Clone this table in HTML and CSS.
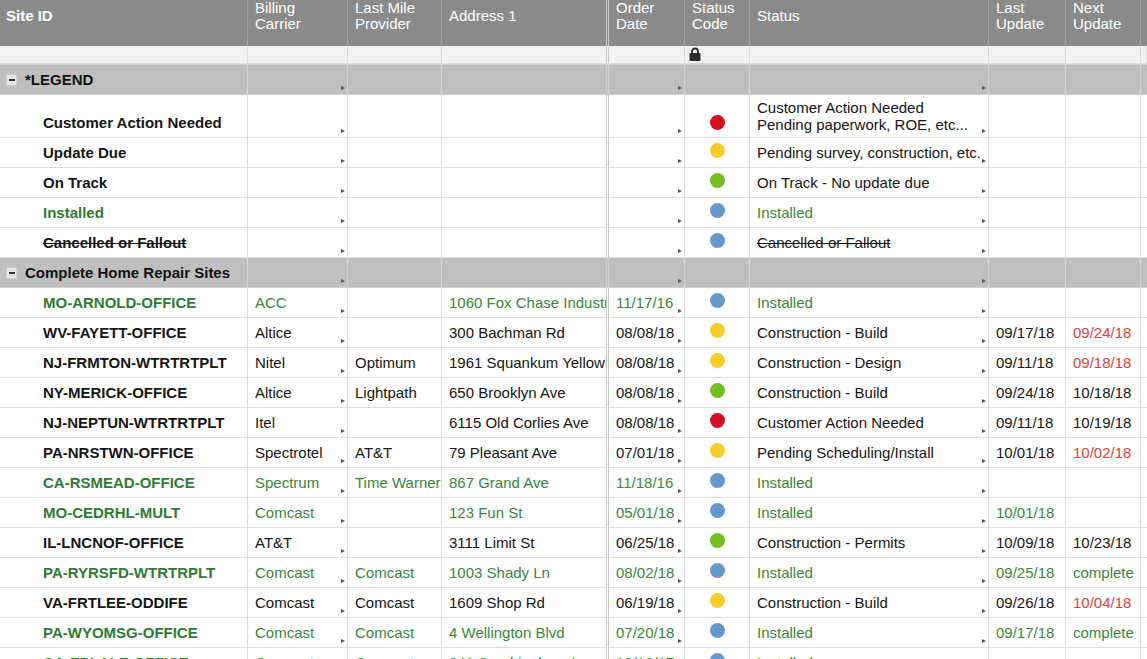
FILE: index.html
```html
<!DOCTYPE html>
<html lang="en">
<head>
<meta charset="utf-8">
<title>Sites</title>
<link rel="stylesheet" href="styles.css">
</head>
<body>
<div class="sheet">
  <div class="row head">
    <div class="hc site">Site ID</div>
    <div class="hc">Billing<br>Carrier</div>
    <div class="hc">Last Mile<br>Provider</div>
    <div class="hc frz">Address 1</div>
    <div class="hc">Order<br>Date</div>
    <div class="hc">Status<br>Code</div>
    <div class="hc">Status</div>
    <div class="hc">Last<br>Update</div>
    <div class="hc">Next<br>Update</div>
    <div class="hc"></div>
  </div>
  <div class="row filter">
    <div class="fc"></div><div class="fc"></div><div class="fc"></div><div class="fc frz"></div><div class="fc"></div>
    <div class="fc lockcell"><svg class="lock" width="12" height="14" viewBox="0 0 12 14"><path d="M3 7 V4.5 A3 3 0 0 1 9 4.5 V7" fill="none" stroke="#2b2b2b" stroke-width="1.8"/><rect x="0.5" y="6" width="11" height="8" rx="1" fill="#2b2b2b"/></svg></div>
    <div class="fc"></div><div class="fc"></div><div class="fc"></div><div class="fc"></div>
  </div>

  <div class="row group">
    <div class="c gsite"><span class="minus"></span><span>*LEGEND</span></div>
    <div class="c m"></div><div class="c"></div><div class="c frz"></div><div class="c m"></div><div class="c"></div><div class="c m"></div><div class="c"></div><div class="c"></div><div class="c"></div>
  </div>

  <div class="row tall">
    <div class="c site b">Customer Action Needed</div>
    <div class="c m"></div><div class="c"></div><div class="c frz"></div><div class="c m"></div>
    <div class="c code"><span class="dot red"></span></div>
    <div class="c m two">Customer Action Needed<br>Pending paperwork, ROE, etc...</div>
    <div class="c"></div><div class="c"></div><div class="c"></div>
  </div>
  <div class="row">
    <div class="c site b">Update Due</div>
    <div class="c m"></div><div class="c"></div><div class="c frz"></div><div class="c m"></div>
    <div class="c code"><span class="dot yel"></span></div>
    <div class="c m">Pending survey, construction, etc.</div>
    <div class="c"></div><div class="c"></div><div class="c"></div>
  </div>
  <div class="row">
    <div class="c site b">On Track</div>
    <div class="c m"></div><div class="c"></div><div class="c frz"></div><div class="c m"></div>
    <div class="c code"><span class="dot grn"></span></div>
    <div class="c m">On Track - No update due</div>
    <div class="c"></div><div class="c"></div><div class="c"></div>
  </div>
  <div class="row g">
    <div class="c site b">Installed</div>
    <div class="c m"></div><div class="c"></div><div class="c frz"></div><div class="c m"></div>
    <div class="c code"><span class="dot blu"></span></div>
    <div class="c m">Installed</div>
    <div class="c"></div><div class="c"></div><div class="c"></div>
  </div>
  <div class="row">
    <div class="c site b strike">Cancelled or Fallout</div>
    <div class="c m"></div><div class="c"></div><div class="c frz"></div><div class="c m"></div>
    <div class="c code"><span class="dot blu"></span></div>
    <div class="c m strike">Cancelled or Fallout</div>
    <div class="c"></div><div class="c"></div><div class="c"></div>
  </div>

  <div class="row group">
    <div class="c gsite"><span class="minus"></span><span>Complete Home Repair Sites</span></div>
    <div class="c m"></div><div class="c"></div><div class="c frz"></div><div class="c m"></div><div class="c"></div><div class="c m"></div><div class="c"></div><div class="c"></div><div class="c"></div>
  </div>

  <div class="row g">
    <div class="c site b">MO-ARNOLD-OFFICE</div><div class="c m">ACC</div><div class="c"></div><div class="c frz">1060 Fox Chase Industrial Dr</div><div class="c m">11/17/16</div><div class="c code"><span class="dot blu"></span></div><div class="c m">Installed</div><div class="c"></div><div class="c"></div><div class="c"></div>
  </div>
  <div class="row">
    <div class="c site b">WV-FAYETT-OFFICE</div><div class="c m">Altice</div><div class="c"></div><div class="c frz">300 Bachman Rd</div><div class="c m">08/08/18</div><div class="c code"><span class="dot yel"></span></div><div class="c m">Construction - Build</div><div class="c">09/17/18</div><div class="c late">09/24/18</div><div class="c"></div>
  </div>
  <div class="row">
    <div class="c site b">NJ-FRMTON-WTRTRTPLT</div><div class="c m">Nitel</div><div class="c">Optimum</div><div class="c frz">1961 Squankum Yellowbrook Rd</div><div class="c m">08/08/18</div><div class="c code"><span class="dot yel"></span></div><div class="c m">Construction - Design</div><div class="c">09/11/18</div><div class="c late">09/18/18</div><div class="c"></div>
  </div>
  <div class="row">
    <div class="c site b">NY-MERICK-OFFICE</div><div class="c m">Altice</div><div class="c">Lightpath</div><div class="c frz">650 Brooklyn Ave</div><div class="c m">08/08/18</div><div class="c code"><span class="dot grn"></span></div><div class="c m">Construction - Build</div><div class="c">09/24/18</div><div class="c">10/18/18</div><div class="c"></div>
  </div>
  <div class="row">
    <div class="c site b">NJ-NEPTUN-WTRTRTPLT</div><div class="c m">Itel</div><div class="c"></div><div class="c frz">6115 Old Corlies Ave</div><div class="c m">08/08/18</div><div class="c code"><span class="dot red"></span></div><div class="c m">Customer Action Needed</div><div class="c">09/11/18</div><div class="c">10/19/18</div><div class="c"></div>
  </div>
  <div class="row">
    <div class="c site b">PA-NRSTWN-OFFICE</div><div class="c m">Spectrotel</div><div class="c">AT&amp;T</div><div class="c frz">79 Pleasant Ave</div><div class="c m">07/01/18</div><div class="c code"><span class="dot yel"></span></div><div class="c m">Pending Scheduling/Install</div><div class="c">10/01/18</div><div class="c late">10/02/18</div><div class="c"></div>
  </div>
  <div class="row g">
    <div class="c site b">CA-RSMEAD-OFFICE</div><div class="c m">Spectrum</div><div class="c">Time Warner</div><div class="c frz">867 Grand Ave</div><div class="c m">11/18/16</div><div class="c code"><span class="dot blu"></span></div><div class="c m">Installed</div><div class="c"></div><div class="c"></div><div class="c"></div>
  </div>
  <div class="row g">
    <div class="c site b">MO-CEDRHL-MULT</div><div class="c m">Comcast</div><div class="c"></div><div class="c frz">123 Fun St</div><div class="c m">05/01/18</div><div class="c code"><span class="dot blu"></span></div><div class="c m">Installed</div><div class="c">10/01/18</div><div class="c"></div><div class="c"></div>
  </div>
  <div class="row">
    <div class="c site b">IL-LNCNOF-OFFICE</div><div class="c m">AT&amp;T</div><div class="c"></div><div class="c frz">3111 Limit St</div><div class="c m">06/25/18</div><div class="c code"><span class="dot grn"></span></div><div class="c m">Construction - Permits</div><div class="c">10/09/18</div><div class="c">10/23/18</div><div class="c"></div>
  </div>
  <div class="row g">
    <div class="c site b">PA-RYRSFD-WTRTRPLT</div><div class="c m">Comcast</div><div class="c">Comcast</div><div class="c frz">1003 Shady Ln</div><div class="c m">08/02/18</div><div class="c code"><span class="dot blu"></span></div><div class="c m">Installed</div><div class="c">09/25/18</div><div class="c">complete</div><div class="c"></div>
  </div>
  <div class="row">
    <div class="c site b">VA-FRTLEE-ODDIFE</div><div class="c m">Comcast</div><div class="c">Comcast</div><div class="c frz">1609 Shop Rd</div><div class="c m">06/19/18</div><div class="c code"><span class="dot yel"></span></div><div class="c m">Construction - Build</div><div class="c">09/26/18</div><div class="c late">10/04/18</div><div class="c"></div>
  </div>
  <div class="row g">
    <div class="c site b">PA-WYOMSG-OFFICE</div><div class="c m">Comcast</div><div class="c">Comcast</div><div class="c frz">4 Wellington Blvd</div><div class="c m">07/20/18</div><div class="c code"><span class="dot blu"></span></div><div class="c m">Installed</div><div class="c">09/17/18</div><div class="c">complete</div><div class="c"></div>
  </div>
  <div class="row g">
    <div class="c site b">CA-EPLALE-OFFICE</div><div class="c m">Comcast</div><div class="c">Comcast</div><div class="c frz">241 Sandringham Ln</div><div class="c m">10/10/17</div><div class="c code"><span class="dot blu"></span></div><div class="c m">Installed</div><div class="c"></div><div class="c"></div><div class="c"></div>
  </div>
</div>
</body>
</html>
```

FILE: styles.css
```css
html, body {
  margin: 0;
  padding: 0;
  background: #ffffff;
  overflow: hidden;
}
body {
  font-family: "Liberation Sans", Arial, sans-serif;
  font-size: 15px;
  color: #151515;
}
.sheet {
  width: 1147px;
  height: 659px;
  overflow: hidden;
}
.row {
  display: grid;
  grid-template-columns: 248px 100px 94px 167px 76px 65px 239px 77px 75px 1fr;
  height: 30px;
}
.row.tall { height: 43px; }

/* header */
.row.head {
  height: 46px;
  background: #8a8a8a;
}
.hc {
  box-sizing: border-box;
  border-right: 1px solid #a3a3a3;
  color: #ffffff;
  line-height: 16px;
  padding: 0 0 14px 7px;
  display: flex;
  align-items: center;
  white-space: nowrap;
  overflow: hidden;
}
.hc.site { font-weight: bold; padding-left: 6px; }
.hc.frz { border-right: 3px double #c9c9c9; }

/* filter row */
.row.filter {
  height: 19px;
  background: #f2f2f2;
  border-bottom: 2px solid #d8d8d8;
  box-sizing: border-box;
}
.fc {
  box-sizing: border-box;
  border-right: 1px solid #dadada;
}
.fc.frz { border-right: 3px double #c9c9c9; }
.lockcell { padding: 1px 0 0 4px; }
.lock { display: block; }

/* cells */
.c {
  position: relative;
  box-sizing: border-box;
  border-right: 1px solid #dedede;
  border-bottom: 1px solid #dedede;
  display: flex;
  align-items: flex-end;
  padding: 0 0 6px 7px;
  line-height: 17px;
  white-space: nowrap;
  overflow: hidden;
}
.c.frz { border-right: 3px double #c9c9c9; }
.c.site { padding-left: 43px; }
.c.b { font-weight: bold; }
.c.two { padding-bottom: 4px; }
.strike { text-decoration: line-through; }
.late { color: #d8453f; }

.row.g .c { color: #3b8540; }
.row.g .c.b { color: #2f7b35; }

/* group rows */
.row.group { background: #bfbfbf; }
.row.group .c {
  border-right-color: #d4d4d4;
  border-bottom-color: #d0d0d0;
}
.row.group .c.frz { border-right: 3px double #cfcfcf; }
.c.gsite {
  font-weight: bold;
  color: #111;
  padding-left: 6px;
  align-items: center;
  padding-bottom: 0;
  gap: 8px;
}
.minus {
  width: 11px;
  height: 12px;
  box-sizing: border-box;
  background: #e6e6e6;
  border: 1px solid #cfcfcf;
  border-radius: 1px;
  display: flex;
  align-items: center;
  justify-content: center;
}
.minus::before {
  content: "";
  width: 6px;
  height: 2px;
  background: #333;
}

/* status dots */
.c.code {
  justify-content: center;
  padding: 0 0 9px 0;
}
.row.tall .c.code { padding-bottom: 7px; }
.dot {
  width: 15px;
  height: 15px;
  border-radius: 50%;
  display: block;
}
.dot.red { background: #d3101f; }
.dot.yel { background: #f7cd2b; }
.dot.grn { background: #73bf1d; }
.dot.blu { background: #6697cb; }

/* dropdown markers */
.c.m::after {
  content: "";
  position: absolute;
  right: 2px;
  bottom: 4px;
  width: 0;
  height: 0;
  border-left: 4px solid #555;
  border-top: 2.5px solid transparent;
  border-bottom: 2.5px solid transparent;
}
```
